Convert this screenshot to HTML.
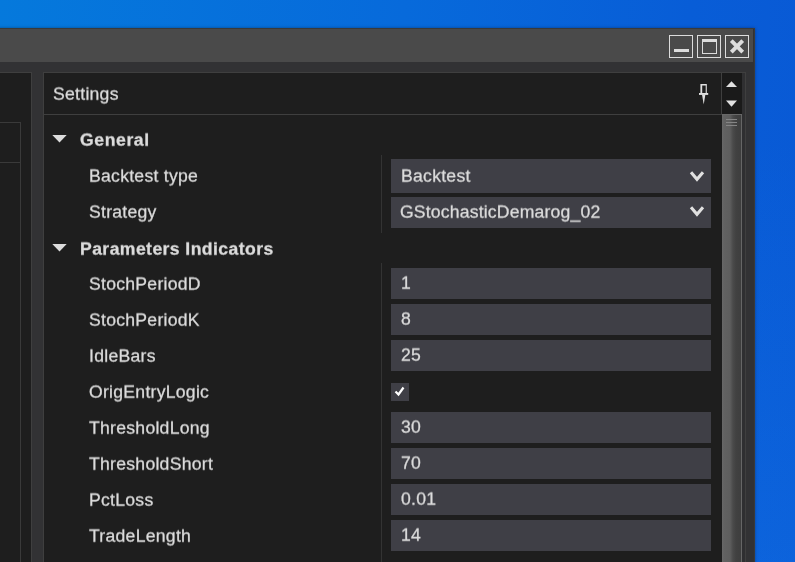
<!DOCTYPE html>
<html><head><meta charset="utf-8">
<style>
*{box-sizing:border-box;margin:0;padding:0}
html,body{width:795px;height:562px;overflow:hidden}
body{position:relative;font-family:"Liberation Sans",Arial,sans-serif;font-size:17.6px;color:#dcdcdc;
background:linear-gradient(180deg,rgba(30,150,255,0) 0%,rgba(30,150,255,0) 25%,rgba(30,150,255,.16) 100%),linear-gradient(95deg,#0579dc 0%,#076adb 48%,#085dd7 82%,#0959d5 100%);}
.abs{position:absolute}
#win{position:absolute;left:-10px;top:28px;width:764.5px;height:540px;background:#323234;border:1px solid #3a3a3a;box-shadow:0 0 3px rgba(0,0,0,.35)}
#title{position:absolute;left:0;top:29px;width:753px;height:33px;background:#4a4a4a}
.wb{position:absolute;top:35px;width:24px;height:23px;border:1.5px solid #dcdcdc}
#lp{position:absolute;left:-5px;top:72px;width:37px;height:500px;background:#1e1e1e;border:1px solid #3f3f3f}
#lpi{position:absolute;left:-5px;top:122px;width:26px;height:450px;border:1px solid #3a3a3a}
#lpl{position:absolute;left:0;top:162px;width:20px;height:1px;background:#3a3a3a}
#sp{position:absolute;left:43px;top:72px;width:703px;height:500px;background:#1e1e1e;border:1px solid #3f3f3f}
#hd{position:absolute;left:44px;top:114px;width:701px;height:1px;background:#3f3f3f}
#vd{position:absolute;left:721px;top:73px;width:1px;height:41px;background:#3f3f3f}
#sb{position:absolute;left:722px;top:114px;width:20px;height:460px;border-top:1px solid #686868;background:linear-gradient(90deg,#686868 0,#626262 2px,#5e5e5e 8px,#4a4a4a 11px,#414141 14px,#3e3e3e 18.5px,#666 19px,#666 20px)}
#ac{position:absolute;left:722px;top:73px;width:20px;height:41px;background:#1a1a1a}
.t{position:absolute;white-space:nowrap;line-height:20px;height:20px;letter-spacing:0.27px;-webkit-text-stroke:0.3px #dcdcdc;will-change:transform;transform:scaleY(0.945);transform-origin:50% 55%}
.b{font-weight:bold;letter-spacing:0.42px}
.in{position:absolute;left:391px;width:320px;height:31px;background:#3f3f46}
.div{position:absolute;left:381px;width:1px;background:#333}
</style></head><body>
<div id="win"></div>
<div id="title"></div>
<div class="wb" style="left:669px"><div class="abs" style="left:4px;top:13px;width:15px;height:2.5px;background:#dcdcdc"></div></div>
<div class="wb" style="left:697px"><div class="abs" style="left:3.5px;top:3px;width:15px;height:15px;border:1px solid #dcdcdc;border-top:3px solid #dcdcdc"></div></div>
<div class="wb" style="left:725px"><svg class="abs" style="left:0;top:0" width="21" height="20" viewBox="0 0 21 20"><path d="M5.3 4.6 L16.7 16.2 M16.7 4.6 L5.3 16.2" stroke="#dcdcdc" stroke-width="3.9" fill="none"/></svg></div>
<div id="lp"></div><div id="lpi"></div><div id="lpl"></div>
<div id="sp"></div><div id="hd"></div><div id="vd"></div><div id="ac"></div><div class="abs" style="left:742px;top:73px;width:3px;height:500px;background:#2f2f31"></div><div id="sb"></div>
<!-- scrollbar grips -->
<div class="abs" style="left:726px;top:119px;width:11px;height:1px;background:#858585"></div>
<div class="abs" style="left:726px;top:122px;width:11px;height:1px;background:#858585"></div>
<div class="abs" style="left:726px;top:125px;width:11px;height:1px;background:#858585"></div>
<!-- arrows -->
<svg class="abs" style="left:725px;top:80px" width="14" height="30" viewBox="0 0 14 30"><path d="M1 7 L6.5 1.2 L12 7 Z" fill="#e0e0e0"/><path d="M1 20.5 L12 20.5 L6.5 26.8 Z" fill="#e0e0e0"/></svg>
<!-- pin -->
<svg class="abs" style="left:697px;top:82px" width="14" height="24" viewBox="0 0 14 24"><path d="M3.4 2.1 H9.8 V11.5 H3.4 Z M5.2 3.4 V11.5 H8.7 V3.4 Z" fill="#e0e0e0" fill-rule="evenodd"/><rect x="2" y="11" width="9.2" height="1.9" fill="#e0e0e0"/><path d="M5 12.5 L8.4 12.5 L6.7 22.6 Z" fill="#e0e0e0"/></svg>

<div class="t" style="left:53px;top:84px">Settings</div>

<svg class="abs" style="left:52.3px;top:134.4px" width="16" height="10"><path d="M0.3 1 L14.7 1 L7.5 8.6 Z" fill="#dcdcdc"/></svg>
<div class="t b" style="left:80.4px;top:130px;letter-spacing:.6px">General</div>
<div class="div" style="top:155px;height:78px"></div>
<div class="t" style="left:89px;top:166px">Backtest type</div>
<div class="in" style="top:159px;height:34px"></div>
<div class="t" style="left:400.5px;top:166px">Backtest</div>
<svg class="abs" style="left:689px;top:170px" width="16" height="13"><path d="M2 2.3 L8 9.3 L14 2.3" stroke="#e0e0e0" stroke-width="3.1" fill="none"/></svg>
<div class="t" style="left:89px;top:202px">Strategy</div>
<div class="in" style="top:197px"></div>
<div class="t" style="left:399.5px;top:202px;letter-spacing:.18px">GStochasticDemarog_02</div>
<svg class="abs" style="left:689px;top:205px" width="16" height="13"><path d="M2 2.3 L8 9.3 L14 2.3" stroke="#e0e0e0" stroke-width="3.1" fill="none"/></svg>

<svg class="abs" style="left:52.3px;top:243.2px" width="16" height="10"><path d="M0.3 1 L14.7 1 L7.5 8.6 Z" fill="#dcdcdc"/></svg>
<div class="t b" style="left:80px;top:239px">Parameters Indicators</div>
<div class="div" style="top:263px;height:300px"></div>

<div class="t" style="left:89px;top:274px">StochPeriodD</div><div class="in" style="top:268px"></div><div class="t" style="left:401px;top:273px">1</div>
<div class="t" style="left:89px;top:310px">StochPeriodK</div><div class="in" style="top:304px"></div><div class="t" style="left:401px;top:309px">8</div>
<div class="t" style="left:89px;top:346px">IdleBars</div><div class="in" style="top:340px"></div><div class="t" style="left:401px;top:345px">25</div>
<div class="t" style="left:89px;top:382px">OrigEntryLogic</div>
<div class="abs" style="left:391px;top:383px;width:18px;height:18px;background:#3f3f46"></div>
<svg class="abs" style="left:391px;top:383px" width="18" height="18"><path d="M4.5 8.5 L7.5 11.5 L12.5 4.5" stroke="#fff" stroke-width="2.2" fill="none"/></svg>
<div class="t" style="left:89px;top:418px">ThresholdLong</div><div class="in" style="top:412px"></div><div class="t" style="left:401px;top:417px">30</div>
<div class="t" style="left:89px;top:454px">ThresholdShort</div><div class="in" style="top:448px"></div><div class="t" style="left:401px;top:453px">70</div>
<div class="t" style="left:89px;top:490px">PctLoss</div><div class="in" style="top:484px"></div><div class="t" style="left:401px;top:489px">0.01</div>
<div class="t" style="left:89px;top:526px">TradeLength</div><div class="in" style="top:520px"></div><div class="t" style="left:401px;top:525px">14</div>
</body></html>
